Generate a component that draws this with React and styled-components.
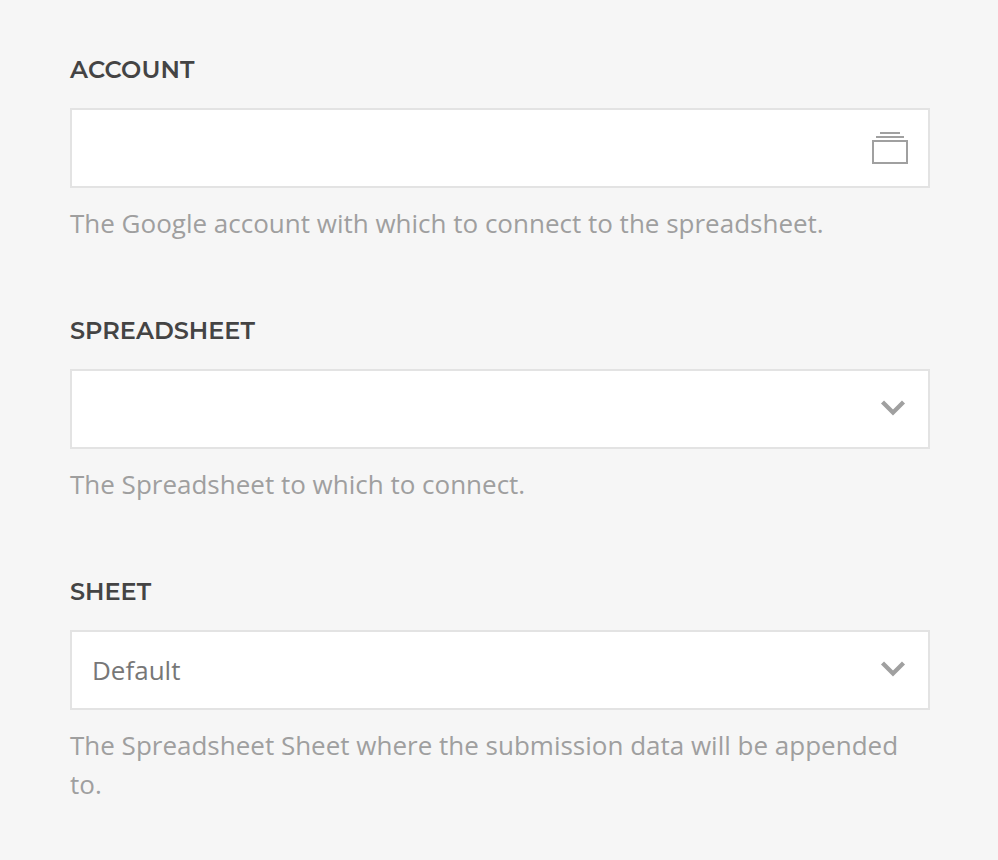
import React from "react";
import styled, { createGlobalStyle } from "styled-components";

const Global = createGlobalStyle`
  * { box-sizing: border-box; }
  body { margin: 0; background: #f6f6f6; font-family: "Open Sans", sans-serif; }
`;
const Form = styled.main`
  min-height: 860px;
  padding: 52px 68px 0 70px;
  display: flex;
  flex-direction: column;
  gap: 70px;
`;
const Field = styled.section`
  display: flex;
  flex-direction: column;
`;
const Label = styled.label`
  height: 36px;
  margin-bottom: 20px;
  font: 600 24px/36px Montserrat, Inter, sans-serif;
  letter-spacing: ${(p) => p.$spacing || "normal"};
  color: #444;
  white-space: nowrap;
`;
const Control = styled.button`
  height: 80px;
  border: 2px solid #e3e3e3;
  background: #fff;
  padding: 0 20px;
  display: flex;
  align-items: center;
  justify-content: space-between;
  font: 400 26px/39px "Open Sans", sans-serif;
  color: #777;
`;
const Help = styled.p`
  margin: 16px 0 0;
  font-size: 26px;
  line-height: 39px;
  color: #9f9f9f;
`;
const Icon = styled.svg`
  display: block;
  fill: none;
  stroke: #a0a0a0;
`;

const StackIcon = () => (
  <Icon width="36" height="32" viewBox="0 0 36 32" strokeWidth="2">
    <path d="M8 1h20M4 5h28M1 9h34v22H1z" />
  </Icon>
);
const Chevron = () => (
  <Icon width="30" height="20" viewBox="0 0 30 20" strokeWidth="4.3">
    <path d="M4.500 3l10.500 10.500L25.500 3" />
  </Icon>
);

const fields = [
  { label: "ACCOUNT", spacing: "0.15px", value: "", icon: <StackIcon />, help: "The Google account with which to connect to the spreadsheet." },
  { label: "SPREADSHEET", value: "", icon: <Chevron />, help: "The Spreadsheet to which to connect." },
  { label: "SHEET", value: "Default", icon: <Chevron />, help: "The Spreadsheet Sheet where the submission data will be appended to." },
];

export default function App() {
  return (
    <>
      <Global />
      <Form>
        {fields.map((f) => (
          <Field key={f.label}>
            <Label $spacing={f.spacing}>{f.label}</Label>
            <Control type="button"><span>{f.value}</span>{f.icon}</Control>
            <Help>{f.help}</Help>
          </Field>
        ))}
      </Form>
    </>
  );
}
